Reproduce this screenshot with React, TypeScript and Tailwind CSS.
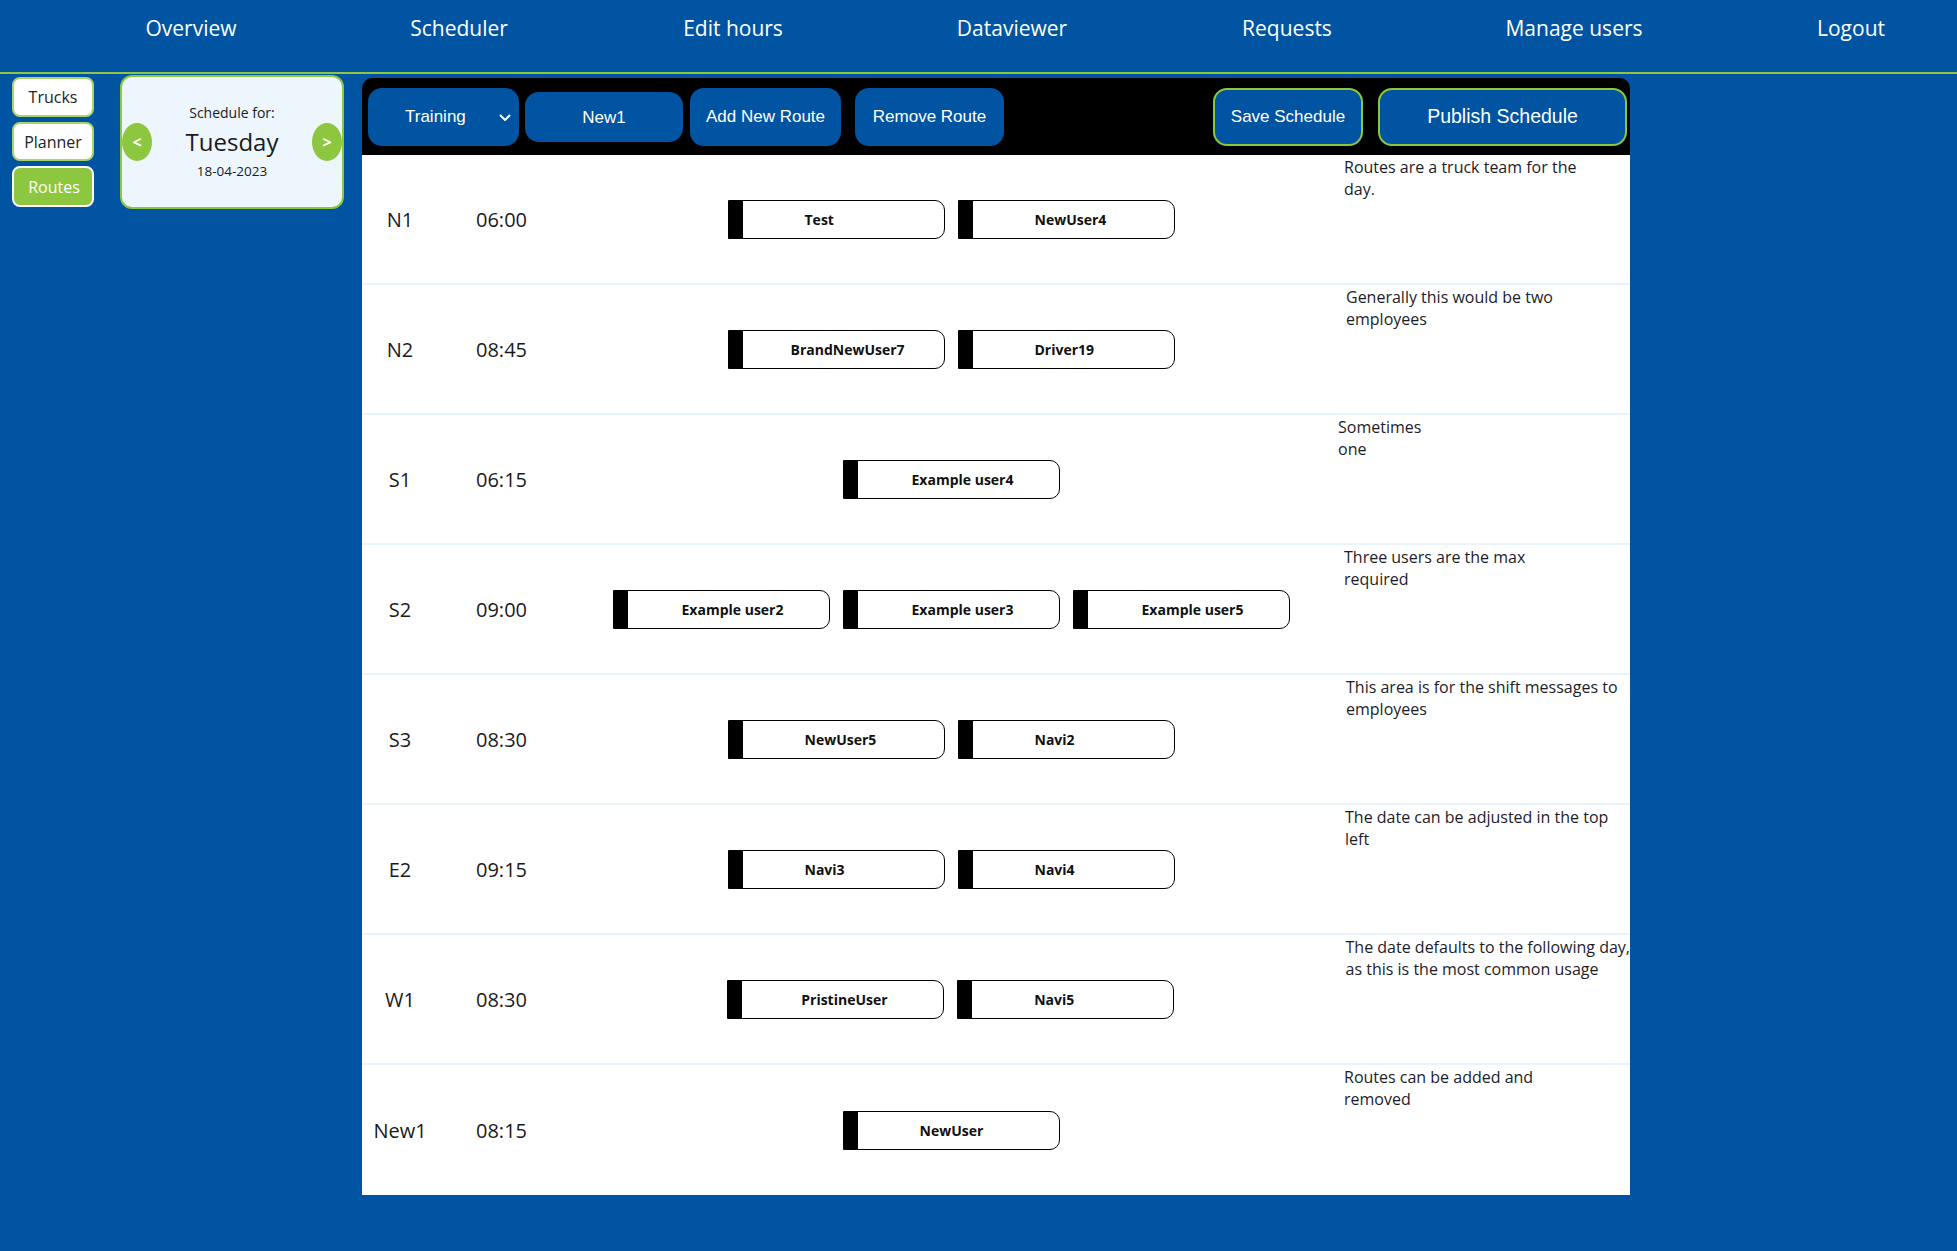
import React from "react";

const BLUE = "bg-[#0054a1]";

const navItems: { label: string; ml: string }[] = [
  { label: "Overview", ml: "ml-[91px]" },
  { label: "Scheduler", ml: "ml-[68px]" },
  { label: "Edit hours", ml: "ml-[74px]" },
  { label: "Dataviewer", ml: "ml-[79px]" },
  { label: "Requests", ml: "ml-[75px]" },
  { label: "Manage users", ml: "ml-[87px]" },
  { label: "Logout", ml: "ml-[77px]" },
];

type Row = { code: string; time: string; users: string[]; msg: string[]; pl: string };

const rows: Row[] = [
  { code: "N1", time: "06:00", users: ["Test", "NewUser4"], msg: ["Routes are a truck team for the", "day."], pl: "pl-[6px]" },
  { code: "N2", time: "08:45", users: ["BrandNewUser7", "Driver19"], msg: ["Generally this would be two", "employees"], pl: "pl-[8px]" },
  { code: "S1", time: "06:15", users: ["Example user4"], msg: ["Sometimes", "one"], pl: "pl-0" },
  { code: "S2", time: "09:00", users: ["Example user2", "Example user3", "Example user5"], msg: ["Three users are the max", "required"], pl: "pl-[6px]" },
  { code: "S3", time: "08:30", users: ["NewUser5", "Navi2"], msg: ["This area is for the shift messages to", "employees"], pl: "pl-[8px]" },
  { code: "E2", time: "09:15", users: ["Navi3", "Navi4"], msg: ["The date can be adjusted in the top", "left"], pl: "pl-[7px]" },
  { code: "W1", time: "08:30", users: ["PristineUser", "Navi5"], msg: ["The date defaults to the following day,", "as this is the most common usage"], pl: "pl-[8px]" },
  { code: "New1", time: "08:15", users: ["NewUser"], msg: ["Routes can be added and", "removed"], pl: "pl-[6px]" },
];

function chipPad(name: string) {
  if (name === "BrandNewUser7") return "pl-[48px]";
  if (name.startsWith("Example")) return "pl-[54px]";
  if (name === "PristineUser") return "pl-[59px]";
  return "pl-[62px]";
}

function Chip({ name }: { name: string }) {
  return (
    <div className="flex h-[39px] w-[217px] overflow-hidden rounded-r-[10px] border border-black bg-white">
      <div className="w-[14px] shrink-0 bg-black" />
      <div
        className={`flex flex-1 items-center whitespace-nowrap text-[14px] font-bold text-[#111] font-['Open_Sans',sans-serif] ${chipPad(name)}`}
      >
        {name}
      </div>
    </div>
  );
}

export default function App() {
  return (
    <div className={`min-h-[1251px] w-[1957px] ${BLUE} font-['Open_Sans',sans-serif]`}>
      {/* Header */}
      <nav className="flex h-[72px] items-start pt-[14px]">
        {navItems.map((n) => (
          <div
            key={n.label}
            className={`w-[200px] shrink-0 whitespace-nowrap text-center text-[21px] leading-[28px] text-white ${n.ml}`}
          >
            {n.label}
          </div>
        ))}
      </nav>
      <div className="h-[2px] bg-[#8dc63f]" />

      <div className="flex items-start">
        {/* Sidebar */}
        <div className="ml-[12px] mt-[3px] flex w-[82px] flex-col gap-[5px]">
          <div className="flex h-[40px] items-center justify-center rounded-[8px] border-2 border-[#a9d46d] bg-white text-[16px] text-[#222]">
            Trucks
          </div>
          <div className="flex h-[39px] items-center justify-center rounded-[8px] border-2 border-[#a9d46d] bg-white text-[16px] text-[#222]">
            Planner
          </div>
          <div className="flex h-[41px] items-center justify-center rounded-[8px] border-2 border-white bg-[#8dc63f] pl-[2px] text-[16px] text-white">
            Routes
          </div>
        </div>

        {/* Schedule card */}
        <div className="ml-[26px] mt-[1px] flex h-[134px] w-[224px] items-center justify-between rounded-[12px] border-2 border-[#8dc63f] bg-[#eef6fd]">
          <div className="flex h-[38px] w-[30px] items-center justify-center rounded-[50%] bg-[#8dc63f] text-[16px] font-bold text-white">
            &lt;
          </div>
          <div className="flex flex-col items-center text-[#1a1a1a]">
            <div className="text-[14px] leading-[20px]">Schedule for:</div>
            <div className="text-[24px] leading-[38px]">Tuesday</div>
            <div className="text-[13.5px] leading-[20px]">18-04-2023</div>
          </div>
          <div className="flex h-[38px] w-[30px] items-center justify-center rounded-[50%] bg-[#8dc63f] text-[16px] font-bold text-white">
            &gt;
          </div>
        </div>

        {/* Main panel */}
        <div className="ml-[18px] mt-[4px] w-[1268px]">
          {/* Toolbar */}
          <div className="flex h-[77px] items-center rounded-t-[10px] bg-black pr-[3px] font-['Liberation_Sans',Arial,sans-serif] text-[17px] text-white">
            <div className="relative ml-[6px] flex h-[58px] w-[151px] items-center rounded-[14px] bg-[#0054a1] pl-[37px]">
              Training
              <svg className="absolute right-[8px] top-[26px]" width="12" height="7" viewBox="0 0 12 7">
                <polyline points="1,1 6,6 11,1" fill="none" stroke="white" strokeWidth="2" />
              </svg>
            </div>
            <div className="ml-[6px] flex h-[50px] w-[158px] items-center justify-center rounded-[14px] bg-[#0054a1] pt-[2px]">
              New1
            </div>
            <div className="ml-[7px] flex h-[58px] w-[151px] items-center justify-center rounded-[14px] bg-[#0054a1]">
              Add New Route
            </div>
            <div className="ml-[14px] flex h-[58px] w-[149px] items-center justify-center rounded-[14px] bg-[#0054a1]">
              Remove Route
            </div>
            <div className="flex-1" />
            <div className="flex h-[58px] w-[150px] items-center justify-center rounded-[14px] border-2 border-[#8dc63f] bg-[#0054a1]">
              Save Schedule
            </div>
            <div className="ml-[15px] flex h-[58px] w-[249px] items-center justify-center rounded-[14px] border-2 border-[#8dc63f] bg-[#0054a1] text-[19.5px]">
              Publish Schedule
            </div>
          </div>

          {/* Rows */}
          <div className="bg-white">
            {rows.map((r, i) => (
              <div
                key={r.code}
                className={`flex h-[130px] ${i < rows.length - 1 ? "border-b-2 border-[#eaf4fd]" : ""}`}
              >
                <div className="flex w-[76px] items-center justify-center pt-[2px] text-[20px] text-[#1a1a1a]">{r.code}</div>
                <div className="flex w-[122px] items-center pl-[38px] pt-[2px] text-[20px] text-[#1a1a1a]">{r.time}</div>
                <div className="flex w-[782px] items-center justify-center gap-[13px]">
                  {r.users.map((u) => (
                    <Chip key={u} name={u} />
                  ))}
                </div>
                <div className={`-ml-[4px] flex-1 pt-[1px] text-[16px] leading-[22px] text-[#1c1c2a] whitespace-nowrap ${r.pl}`}>
                  {r.msg.map((m) => (
                    <div key={m}>{m}</div>
                  ))}
                </div>
              </div>
            ))}
          </div>
        </div>
      </div>
    </div>
  );
}
